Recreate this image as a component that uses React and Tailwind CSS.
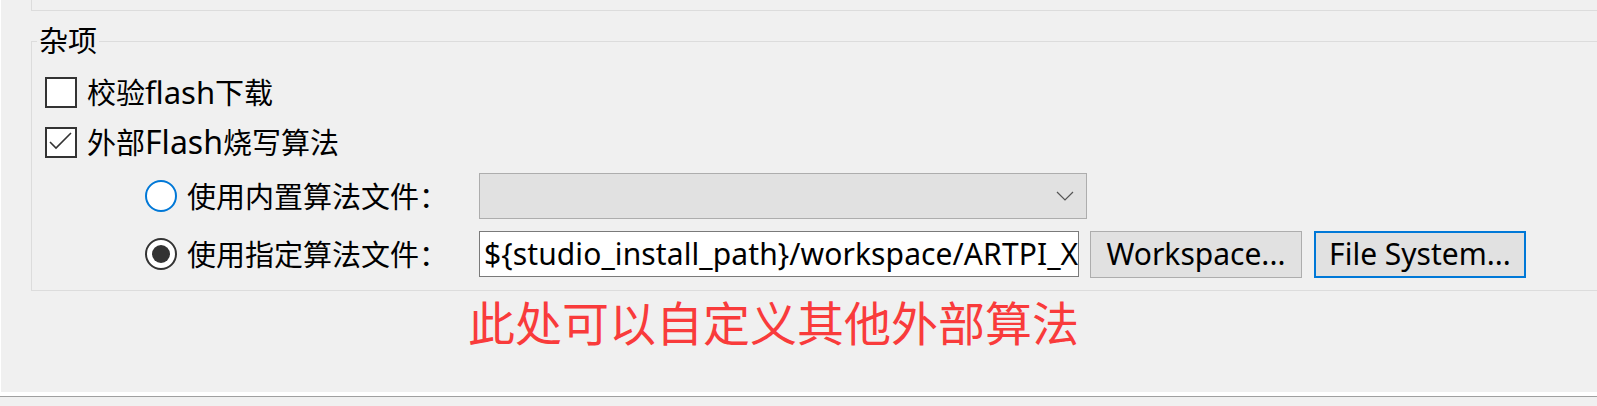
export default function App() {
  return (
    <div className="w-[1597px] h-[406px] bg-[#f0f0f0] overflow-hidden text-black font-[family-name:'Noto_Sans','Noto_Sans_CJK_SC',sans-serif]">
      {/* Settings panel */}
      <div className="h-[396px] border-l border-b-4 border-white flex flex-col">
        {/* End of the previous group */}
        <div className="ml-[30px] h-[11px] border-l border-b border-[#dcdcdc]" />

        {/* 杂项 group */}
        <div className="relative ml-[30px] mt-[30px] h-[250px] border-t border-l border-b border-[#dcdcdc] pt-[25px]">
          <span className="absolute left-[5px] -top-[16px] px-[2px] bg-[#f0f0f0] text-[29px] leading-[29px]">杂项</span>

          <div className="h-[50px] pl-[13px] flex items-center gap-[10px]">
            <div className="w-[32px] h-[31px] border-2 border-[#333333] bg-white" />
            <span className="text-[29px] leading-none">
              校验<span className="text-[31px]">flash</span>下载
            </span>
          </div>

          <div className="h-[50px] pl-[13px] flex items-center gap-[10px]">
            <div className="w-[32px] h-[31px] border-2 border-[#333333] bg-white flex items-center justify-center">
              <svg width="28" height="27" viewBox="0 0 28 27" fill="none">
                <polyline points="3,13 9,19 24,4" stroke="#333333" strokeWidth="1.6" />
              </svg>
            </div>
            <span className="text-[29px] leading-none">
              外部<span className="text-[32px]">Flash</span>烧写算法
            </span>
          </div>

          <div className="h-[58px] pl-[113px] flex items-center">
            <div className="w-[32px] h-[32px] rounded-full border-2 border-[#0078d7] bg-white" />
            <span className="ml-[10px] w-[292px] text-[29px] leading-none">使用内置算法文件：</span>
            <div className="w-[608px] h-[46px] bg-[#e1e1e1] border border-[#adadad] flex items-center justify-end pr-[12px]">
              <svg width="18" height="10" viewBox="0 0 18 10" fill="none">
                <polyline points="1,1 9,9 17,1" stroke="#555555" strokeWidth="1.2" />
              </svg>
            </div>
          </div>

          <div className="h-[58px] pl-[113px] flex items-center">
            <div className="w-[32px] h-[32px] rounded-full border-2 border-[#333333] bg-white flex items-center justify-center">
              <div className="w-[18px] h-[18px] rounded-full bg-[#333333]" />
            </div>
            <span className="ml-[10px] w-[292px] text-[29px] leading-none">使用指定算法文件：</span>
            <div className="w-[600px] h-[46px] bg-white border border-[#7a7a7a] overflow-hidden flex items-center pl-[4px]">
              <span className="whitespace-nowrap text-[30px] tracking-[0.1px] leading-none">{'${studio_install_path}/workspace/ARTPI_X'}</span>
            </div>
            <button className="ml-[11px] w-[212px] h-[47px] bg-[#e1e1e1] border border-[#adadad] text-[30px] leading-none">
              Workspace...
            </button>
            <button className="ml-[12px] w-[212px] h-[47px] bg-[#e1e1e1] border-2 border-[#0078d7] text-[30px] leading-none">
              File System...
            </button>
          </div>
        </div>

        <div className="pl-[467px] mt-[9px] text-[47px] leading-[47px] text-[#f93b3b]">此处可以自定义其他外部算法</div>
      </div>
      <div className="h-px bg-[#a0a0a0]" />
    </div>
  )
}
